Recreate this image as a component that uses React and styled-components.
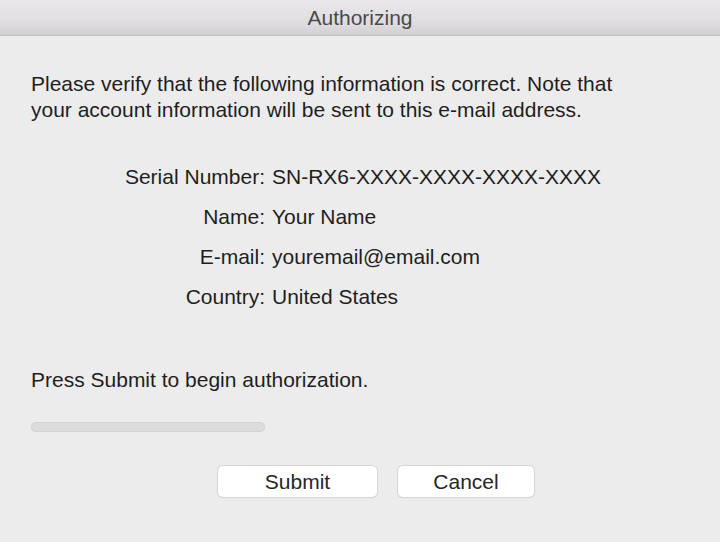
import React from "react";
import styled, { createGlobalStyle } from "styled-components";

const Global = createGlobalStyle`
  html, body { margin: 0; padding: 0; background: #ececec; }
  body { font-family: "Liberation Sans", Arial, sans-serif; }
`;

const Window = styled.div`
  width: 720px;
  height: 542px;
  background: #ececec;
  display: flex;
  flex-direction: column;
  overflow: hidden;
`;

const TitleBar = styled.div`
  height: 35px;
  flex: none;
  display: flex;
  align-items: center;
  justify-content: center;
  background: linear-gradient(#e9e7e9 0%, #e0dee0 60%, #d2d0d2 100%);
  border-bottom: 1px solid #c2c2c2;
  color: #4a4a4a;
  font-size: 21px;
`;

const Body = styled.div`
  flex: 1;
  display: flex;
  flex-direction: column;
  padding: 35px 31px 0 31px;
  color: #1e1e1e;
  font-size: 21px;
`;

const Paragraph = styled.p`
  margin: 0;
  line-height: 26px;
`;

const InfoGrid = styled.div`
  display: grid;
  grid-template-columns: 234px auto;
  column-gap: 7px;
  row-gap: 16px;
  margin-top: 42px;
  line-height: 24px;
`;

const Label = styled.div`
  text-align: right;
`;

const Value = styled.div``;

const Status = styled.p`
  margin: 59px 0 0 0;
  line-height: 24px;
`;

const Progress = styled.div`
  width: 234px;
  height: 10px;
  margin-top: 30px;
  border-radius: 5px;
  background: #dcdcdc;
  box-shadow: inset 0 0 0 1px #d3d3d3;
`;

const Buttons = styled.div`
  display: flex;
  gap: 21px;
  margin-top: 34px;
  padding-left: 187px;
`;

const Button = styled.button`
  width: ${(p) => p.$w}px;
  height: 31px;
  border: none;
  border-radius: 5px;
  background: #ffffff;
  box-shadow: 0 0 0 1px #d6d6d6, 0 1px 1px rgba(0, 0, 0, 0.15);
  font-family: "Liberation Sans", Arial, sans-serif;
  font-size: 21px;
  color: #262626;
  padding: 0;
`;

const rows = [
  ["Serial Number:", "SN-RX6-XXXX-XXXX-XXXX-XXXX"],
  ["Name:", "Your Name"],
  ["E-mail:", "youremail@email.com"],
  ["Country:", "United States"],
];

export default function App() {
  return (
    <Window>
      <Global />
      <TitleBar>Authorizing</TitleBar>
      <Body>
        <Paragraph>
          Please verify that the following information is correct. Note that
          <br />
          your account information will be sent to this e-mail address.
        </Paragraph>
        <InfoGrid>
          {rows.map(([l, v]) => (
            <React.Fragment key={l}>
              <Label>{l}</Label>
              <Value>{v}</Value>
            </React.Fragment>
          ))}
        </InfoGrid>
        <Status>Press Submit to begin authorization.</Status>
        <Progress />
        <Buttons>
          <Button $w={159}>Submit</Button>
          <Button $w={136}>Cancel</Button>
        </Buttons>
      </Body>
    </Window>
  );
}
